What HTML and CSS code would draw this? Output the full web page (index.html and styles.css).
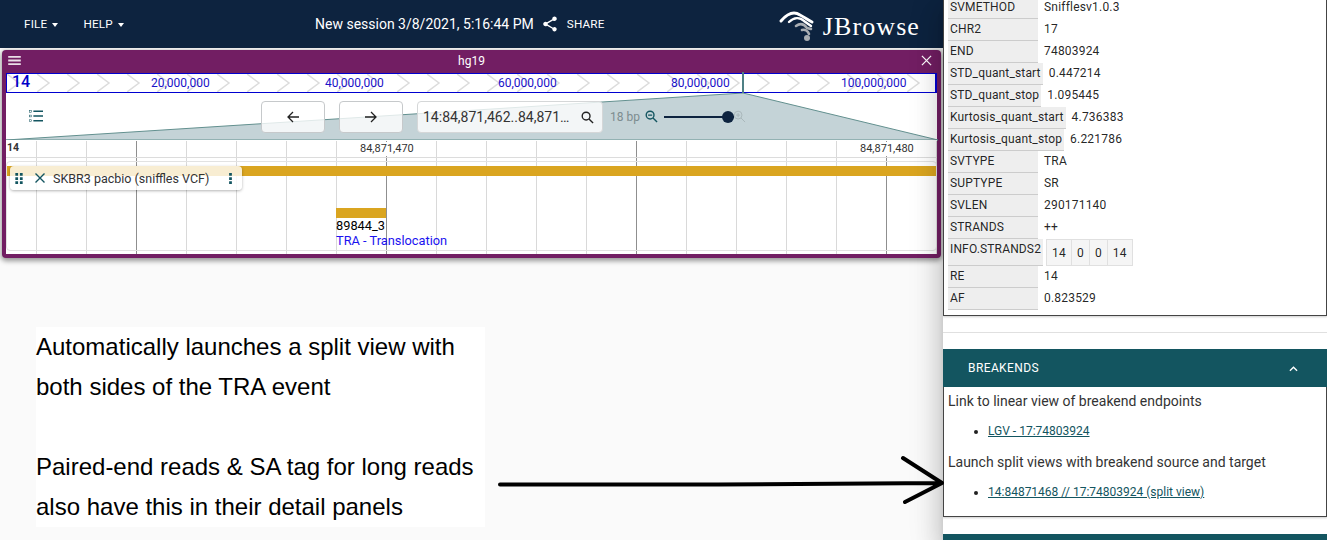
FILE: index.html
```html
<!DOCTYPE html>
<html lang="en">
<head>
<meta charset="utf-8">
<title>JBrowse</title>
<link rel="stylesheet" href="styles.css">
</head>
<body>
<main class="app">
  <header class="appbar">
    <nav class="menus">
      <span class="menu">FILE<i class="caret"></i></span>
      <span class="menu">HELP<i class="caret"></i></span>
    </nav>
    <div class="session">
      <span class="session-name">New session 3/8/2021, 5:16:44 PM</span>
      <svg class="share-icon" viewBox="0 0 24 24"><path d="M18 16.08c-.76 0-1.44.3-1.96.77L8.91 12.7c.05-.23.09-.46.09-.7s-.04-.47-.09-.7l7.05-4.11c.54.5 1.25.81 2.04.81 1.66 0 3-1.34 3-3s-1.34-3-3-3-3 1.34-3 3c0 .24.04.47.09.7L8.04 9.81C7.5 9.31 6.79 9 6 9c-1.66 0-3 1.34-3 3s1.34 3 3 3c.79 0 1.5-.31 2.04-.81l7.12 4.16c-.05.21-.08.43-.08.65 0 1.61 1.31 2.92 2.92 2.92s2.92-1.31 2.92-2.92-1.31-2.92-2.92-2.92z"/></svg>
      <span class="share-label">SHARE</span>
    </div>
    <div class="logo">
      <svg class="logo-mark" viewBox="0 0 34 32">
        <path class="arc-white" d="M1 15 C7 8 14 5 20 9 C24 11 28 14 32 16" />
        <path class="arc-white thin" d="M9 16 C14 11 20 11 24 15 L31 20" />
        <path class="arc-grey" d="M16 20 C20 17 24 18 27 22 L31 23" />
        <path class="arc-grey" d="M22 24 C25 23 28 25 29 28" />
        <circle class="dot-grey" cx="27" cy="32" r="3" />
      </svg>
      <span class="logo-text">JBrowse</span>
    </div>
  </header>

  <section class="view">
    <div class="view-title">
      <svg class="title-icon" viewBox="0 0 14 10"><path d="M0 0h14v2H0zM0 4h14v2H0zM0 8h14v2H0z"/></svg>
      <span class="view-name">hg19</span>
      <svg class="title-icon close" viewBox="0 0 12 12"><path d="M1 1l10 10M11 1L1 11"/></svg>
    </div>
    <div class="view-body">
      <div class="overview">
        <div class="ov-block ov-left">
          <svg class="chev" width="100%" height="18"><defs><pattern id="cv" width="30" height="18" patternUnits="userSpaceOnUse"><path d="M0 0l12 9L0 18" fill="none" stroke="#dcdcdc" stroke-width="1.5"/></pattern></defs><rect width="100%" height="18" fill="url(#cv)"/></svg>
          <b class="ov-ref">14</b>
          <span class="ov-label" style="left:144px">20,000,000</span>
          <span class="ov-label" style="left:318px">40,000,000</span>
          <span class="ov-label" style="left:491px">60,000,000</span>
          <span class="ov-label" style="left:664px">80,000,000</span>
        </div>
        <div class="ov-block ov-right">
          <svg class="chev" width="100%" height="18"><defs><pattern id="cw" x="14" width="30" height="18" patternUnits="userSpaceOnUse"><path d="M0 0l12 9L0 18" fill="none" stroke="#dcdcdc" stroke-width="1.5"/></pattern></defs><rect width="100%" height="18" fill="url(#cw)"/></svg>
          <span class="ov-label" style="left:98px">100,000,000</span>
        </div>
      </div>
      <svg class="zoom-poly" viewBox="0 0 932 48"><polygon points="0,47 737,0 932,47" /></svg>
      <i class="ov-tick"></i>

      <div class="toolbar">
        <svg class="tracks-icon" viewBox="0 0 16 13"><path d="M5 1h11M5 6.5h11M5 12h11" stroke-width="1.6"/><rect x=".7" y=".2" width="2" height="2"/><rect x=".7" y="5.5" width="2" height="2"/><rect x=".7" y="10.8" width="2" height="2"/></svg>
        <button class="nav-btn"><svg viewBox="0 0 12 12"><path d="M12 6H1M6 1L1 6l5 5"/></svg></button>
        <button class="nav-btn"><svg viewBox="0 0 12 12"><path d="M0 6h11M6 1l5 5-5 5"/></svg></button>
        <div class="search">
          <span class="locstring">14:84,871,462..84,871…</span>
          <svg class="search-icon" viewBox="0 0 14 14"><circle cx="5.5" cy="5.5" r="4.2"/><path d="M8.6 8.6L13 13"/></svg>
        </div>
        <span class="bp">18 bp</span>
        <svg class="mag" viewBox="0 0 14 14"><circle cx="5.5" cy="5.5" r="4.2"/><path d="M8.6 8.6L13 13M3.3 5.5h4.4"/></svg>
        <div class="slider"><i class="thumb"></i></div>
        <svg class="mag mag-off" viewBox="0 0 14 14"><circle cx="5.5" cy="5.5" r="4.2"/><path d="M8.6 8.6L13 13M3.3 5.5h4.4M5.5 3.3v4.4"/></svg>
      </div>

      <div class="tracks">
        <div class="scale-row">
          <b class="ref-name">14</b>
          <span class="scale-num" style="left:353px">84,871,470</span>
          <span class="scale-num" style="left:853px">84,871,480</span>
        </div>
        <div class="track">
          <i class="gold-bar"></i>
          <i class="gold-feature"></i>
          <span class="feat-name">89844_3</span>
          <span class="feat-desc">TRA - Translocation</span>
          <div class="track-label">
            <svg class="drag" viewBox="0 0 8 12"><path d="M0 0h3v3H0zM5 0h3v3H5zM0 4.500h3v3H0zM5 4.500h3v3H5zM0 9h3v3H0zM5 9h3v3H5z"/></svg>
            <svg class="label-x" viewBox="0 0 10 10"><path d="M.5.5l9 9M9.500.5l-9 9"/></svg>
            <span class="label-text">SKBR3 pacbio (sniffles VCF)</span>
            <svg class="label-more" viewBox="0 0 3 12"><path d="M0 0h3v3H0zM0 4.500h3v3H0zM0 9h3v3H0z"/></svg>
          </div>
        </div>
      </div>
    </div>
  </section>

  <section class="note">
    <p>Automatically launches a split view with<br>both sides of the TRA event</p>
    <p>Paired-end reads &amp; SA tag for long reads<br>also have this in their detail panels</p>
  </section>
</main>

<aside class="drawer">
  <div class="panel attrs">
    <div class="row"><span class="key">SVMETHOD</span><span class="val">Snifflesv1.0.3</span></div>
    <div class="row"><span class="key">CHR2</span><span class="val">17</span></div>
    <div class="row"><span class="key">END</span><span class="val">74803924</span></div>
    <div class="row"><span class="key">STD_quant_start</span><span class="val">0.447214</span></div>
    <div class="row"><span class="key">STD_quant_stop</span><span class="val">1.095445</span></div>
    <div class="row"><span class="key">Kurtosis_quant_start</span><span class="val">4.736383</span></div>
    <div class="row"><span class="key">Kurtosis_quant_stop</span><span class="val">6.221786</span></div>
    <div class="row"><span class="key">SVTYPE</span><span class="val">TRA</span></div>
    <div class="row"><span class="key">SUPTYPE</span><span class="val">SR</span></div>
    <div class="row"><span class="key">SVLEN</span><span class="val">290171140</span></div>
    <div class="row"><span class="key">STRANDS</span><span class="val">++</span></div>
    <div class="row row-tall"><span class="key">INFO.STRANDS2</span><span class="cells"><span class="cell">14</span><span class="cell">0</span><span class="cell">0</span><span class="cell">14</span></span></div>
    <div class="row"><span class="key">RE</span><span class="val">14</span></div>
    <div class="row"><span class="key">AF</span><span class="val">0.823529</span></div>
  </div>
  <hr class="divider">
  <div class="acc-head">
    <span>BREAKENDS</span>
    <svg class="chev-up" viewBox="0 0 10 6"><path d="M1 5l4-4 4 4"/></svg>
  </div>
  <div class="panel breakends">
    <p class="be-text">Link to linear view of breakend endpoints</p>
    <ul class="be-list"><li><a href="#">LGV - 17:74803924</a></li></ul>
    <p class="be-text">Launch split views with breakend source and target</p>
    <ul class="be-list"><li><a href="#">14:84871468 // 17:74803924 (split view)</a></li></ul>
  </div>
  <div class="acc-head next"></div>
</aside>

<svg class="arrow" viewBox="0 0 450 60"><path d="M2 34.500H220L444 33M405 8L444 33L407 52"/></svg>
</body>
</html>
```
FILE: styles.css
```css
* { box-sizing: border-box; }
html, body { margin: 0; height: 540px; overflow: hidden; }
body {
  display: flex;
  width: 1327px;
  background: #fafafa;
  font-family: Roboto, sans-serif;
  color: rgba(0,0,0,.87);
  position: relative;
}
.app { width: 943px; flex: none; }

/* App bar */
.appbar {
  height: 48px;
  background: #0d233f;
  display: flex;
  align-items: center;
  color: #fff;
  position: relative;
}
.menus { display: flex; gap: 25px; padding-left: 24px; width: 315px; }
.menu { font-size: 11.7px; letter-spacing: .2px; display: flex; align-items: center; gap: 5px; }
.caret { width: 0; height: 0; border: 3.5px solid transparent; border-top: 4px solid #fff; border-bottom: 0; margin-top: 1px; }
.session { display: flex; align-items: center; }
.session-name { font-size: 14px; }
.share-icon { width: 18px; height: 18px; fill: #fff; margin-left: 7px; }
.share-label { font-size: 11.7px; margin-left: 8px; letter-spacing: .2px; }
.logo { margin-left: auto; margin-right: 23px; display: flex; align-items: center; gap: 9px; }
.logo-mark { width: 34px; height: 32px; overflow: visible; margin-top: -5px; }
.arc-white, .arc-grey { fill: none; stroke-linecap: round; }
.arc-white { stroke: #fff; stroke-width: 3; }
.arc-white.thin { stroke-width: 2.4; }
.arc-grey { stroke: #a9adb2; stroke-width: 2.6; }
.dot-grey { fill: #a9adb2; }
.logo-text { font-family: "Liberation Serif", serif; font-size: 26px; letter-spacing: 1.1px; line-height: 30px; margin-top: 6px; }

/* View */
.view {
  margin: 2px 2px 0 2px;
  height: 208px;
  background: #721e63;
  border-radius: 4px;
  padding: 0 4px 4px;
  box-shadow: 0 2px 5px 1px rgba(0,0,0,.4);
  display: flex;
  flex-direction: column;
}
.view-title { height: 23px; flex: none; display: flex; align-items: center; justify-content: space-between; color: #fff; padding: 0 3px 2px 2px; position: relative; }
.title-icon { width: 13px; height: 9px; fill: #eadfe8; }
.title-icon.close { width: 11px; height: 11px; fill: none; stroke: #fff; stroke-width: 1.4; margin-right: 2px; }
.view-name { font-size: 12px; position: absolute; left: 0; right: 0; text-align: center; }
.view-body { flex: 1; background: #fff; position: relative; }

.overview { height: 20px; display: flex; border: 1px solid #0000d0; border-right-width: 2px; background: #fff; position: relative; }
.ov-block { height: 18px; position: relative; overflow: hidden; }
.ov-left { width: 736px; }
.ov-right { flex: 1; }
.chev { display: block; position: absolute; left: 0; top: 0; }
.ov-ref { position: absolute; left: 5px; top: -2px; font-size: 16px; font-weight: 500; color: #0000c8; }
.ov-label { position: absolute; top: 1px; font-size: 12px; line-height: 16px; color: #1a12c9; background: none; }
.zoom-poly { position: absolute; left: 0; top: 20px; width: 932px; height: 48px; }
.zoom-poly polygon { fill: #c4d3d7; stroke: #63908f; stroke-width: 1; }
.ov-tick { position: absolute; left: 736px; top: -1px; width: 2px; height: 21px; background: #4f8085; }

.toolbar { height: 47px; position: relative; display: flex; align-items: center; padding-left: 255px; }
.tracks-icon { position: absolute; left: 23px; top: 17px; width: 14px; height: 12px; fill: #3d7479; stroke: #135560; }
.tracks-icon rect { stroke-width: .6; fill: none; stroke: #135560; }
.nav-btn {
  width: 64px; height: 32px; padding: 0; margin-right: 14px;
  border: 1px solid #c6c9cb; border-radius: 4px;
  background: rgba(255,255,255,.8);
  display: flex; align-items: center; justify-content: center;
}
.nav-btn svg { width: 12px; height: 12px; fill: none; stroke: #222; stroke-width: 1.3; }
.search {
  width: 186px; height: 32px;
  border: 1px solid #d5d7d8; border-radius: 4px;
  background: rgba(255,255,255,.8);
  display: flex; align-items: center; padding-left: 5px;
  font-size: 14px; color: #333; position: relative;
}
.search-icon { position: absolute; right: 8px; top: 9px; width: 13px; height: 13px; fill: none; stroke: #222; stroke-width: 1.5; }
.bp { font-size: 12px; color: #7d8c8f; margin-left: 7px; }
.mag { width: 13px; height: 13px; fill: none; stroke: #135560; stroke-width: 1.5; margin-left: 5px; }
.mag-off { stroke: #a7b6b9; stroke-width: 1; margin-left: -1px; }
.slider { width: 70px; height: 2px; background: #0d233f; margin-left: 6px; position: relative; }
.thumb { position: absolute; right: 0; top: -5px; width: 12px; height: 12px; border-radius: 50%; background: #0d233f; }

.tracks {
  height: 114px; position: relative; overflow: hidden;
  border-top: 1px solid #fff;
  background:
    repeating-linear-gradient(90deg, transparent 0, transparent 130px, #8f8f8f 130px, #8f8f8f 131px, transparent 131px, transparent 250px) ,
    repeating-linear-gradient(90deg, transparent 0, transparent 30px, #d9d9d9 30px, #d9d9d9 31px, transparent 31px, transparent 50px);
  background-color: #fff;
}
.scale-row { height: 17px; position: relative; border-bottom: 1px solid #dcdcdc; }
.ref-name { position: absolute; left: 1px; top: 0; font-size: 10.500px; font-weight: 700; color: #333; }
.scale-num { position: absolute; top: 1px; font-size: 11px; line-height: 14px; color: #333; background: #fff; padding: 0 1px; }
.track { height: 90px; margin-top: 3px; position: relative; border: 1px solid #e2e2e2; border-radius: 4px; }
.gold-bar { position: absolute; left: 0; right: 0; top: 4px; height: 10px; background: #daa520; }
.gold-feature { position: absolute; left: 329px; top: 46px; width: 50px; height: 10px; background: #daa520; }
.feat-name { position: absolute; left: 329px; top: 56px; font-size: 12.800px; line-height: 15px; color: #000; }
.feat-desc { position: absolute; left: 329px; top: 71px; font-size: 12.800px; line-height: 15px; color: #1a12f0; }
.track-label {
  position: absolute; left: 3px; top: 4px; width: 232px; height: 24px;
  background: rgba(255,255,255,.8);
  border-radius: 4px;
  box-shadow: 0 1px 3px rgba(0,0,0,.3);
  display: flex; align-items: center;
  padding: 0 10px 0 5px;
  font-size: 12.500px; color: #333;
}
.drag { width: 8px; height: 11px; fill: #135560; flex: none; }
.label-x { width: 10px; height: 10px; fill: none; stroke: #135560; stroke-width: 1.4; flex: none; margin-left: 12px; }
.label-text { margin-left: 8px; white-space: nowrap; }
.label-more { width: 3px; height: 11px; fill: #135560; flex: none; margin-left: auto; }

/* Note */
.note { margin: 69px 0 0 36px; width: 449px; height: 200px; background: #fff; font-family: "Liberation Sans", Arial, sans-serif; font-size: 24px; line-height: 40px; color: #000; }
.note p { margin: 0 0 40px; }

/* Drawer */
.drawer {
  width: 384px; flex: none; background: #fff; height: 540px; overflow: hidden;
  position: relative; z-index: 2;
  box-shadow: 0 8px 10px -5px rgba(0,0,0,.2), 0 16px 24px 2px rgba(0,0,0,.14), 0 6px 30px 5px rgba(0,0,0,.12);
}
.panel { border: 1px solid #444; border-top: 0; box-shadow: 0 1px 2px rgba(0,0,0,.2); background: #fff; }
.attrs { height: 316px; padding: 0 4px; overflow: hidden; }
.row { display: flex; height: 22px; font-size: 12px; line-height: 16px; }
.row:first-child { margin-top: -3px; }
.key { min-width: 90px; background: #eee; border-bottom: 1px solid #ccc; padding: 2px; white-space: nowrap; letter-spacing: .15px; }
.val { padding: 2px 0 0 6px; letter-spacing: .2px; }
.row-tall { height: 27px; }
.cells { display: flex; margin-left: 4px; margin-top: 0; }
.cell { background: #f5f5f5; border: 1px solid #e0e0e0; padding: 5px 5px 0; margin-left: -1px; height: 27px; letter-spacing: .2px; }
.row-tall .key { padding-top: 2px; }
.divider { margin: 16px 0 16px; border: 0; border-top: 1px solid #e0e0e0; }
.acc-head { height: 38px; background: #135560; color: #fff; font-size: 12px; letter-spacing: .4px; display: flex; align-items: center; justify-content: space-between; padding: 0 29px 0 25px; }
.chev-up { width: 9px; height: 6px; fill: none; stroke: #fff; stroke-width: 1.5; margin-top: 2px; }
.breakends { height: 130px; padding: 5px 4px 0; font-size: 14px; }
.be-text { margin: 0; font-size: 14px; line-height: 18px; color: #333; }
.be-list { margin: 12px 0 13px; padding-left: 40px; font-size: 12px; line-height: 18px; }
.be-list a { color: #135560; text-decoration: underline; }
.next { margin-top: 17px; }

.arrow { position: absolute; left: 498px; top: 450px; width: 450px; height: 60px; z-index: 3; fill: none; stroke: #000; stroke-width: 4; stroke-linecap: round; stroke-linejoin: round; }
```
